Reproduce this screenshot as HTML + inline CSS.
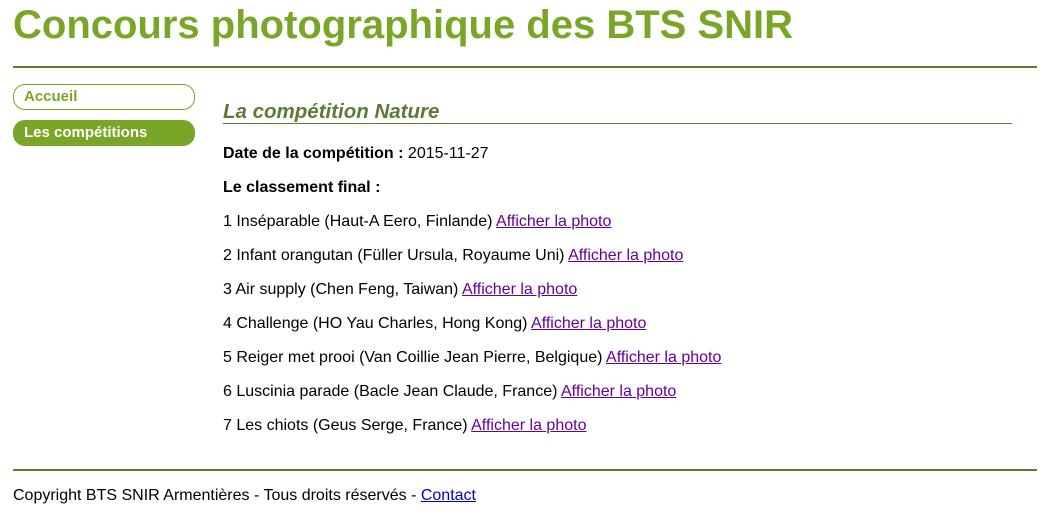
<!DOCTYPE html>
<html><head><meta charset="utf-8"><style>
body{margin:0;width:1047px;height:515px;font-family:"Liberation Sans",Arial,sans-serif;background:#fff;color:#000;position:relative;overflow:hidden}
h1{position:absolute;left:13px;top:3px;margin:0;font-size:40px;font-weight:bold;color:#7aa627;white-space:nowrap}
.rule{position:absolute;left:13px;width:1024px;height:2px;background:#5e7a34}
.nav{position:absolute;left:13px;font-size:15px;font-weight:bold;box-sizing:border-box;border-radius:12px}
.n1{top:84px;width:182px;height:26px;border:1px solid #7aa627;color:#7aa627;line-height:24px;padding-left:10px}
.n2{top:120px;width:182px;height:26px;background:#7aa627;color:#fff;line-height:26px;padding-left:11px}
h2{position:absolute;left:223px;top:101px;margin:0;width:789px;font-size:20.5px;font-style:italic;font-weight:bold;color:#5e7a34;border-bottom:1px solid #5e7a34;padding-bottom:0;line-height:22px}
.p{position:absolute;left:223px;font-size:16px;white-space:nowrap}
a{color:#660099;text-decoration:underline}
.f{position:absolute;left:13px;top:487px;font-size:16px}
.f a{color:#0000cc}
</style></head><body>
<h1>Concours photographique des BTS SNIR</h1>
<div class="rule" style="top:66px"></div>
<div class="nav n1">Accueil</div>
<div class="nav n2">Les compétitions</div>
<h2>La compétition Nature</h2>
<div class="p" style="top:145px"><b>Date de la compétition :</b> 2015-11-27</div>
<div class="p" style="top:179px"><b>Le classement final :</b></div>
<div class="p" style="top:213px">1 Inséparable (Haut-A Eero, Finlande) <a>Afficher la photo</a></div>
<div class="p" style="top:247px">2 Infant orangutan (Füller Ursula, Royaume Uni) <a>Afficher la photo</a></div>
<div class="p" style="top:281px">3 Air supply (Chen Feng, Taiwan) <a>Afficher la photo</a></div>
<div class="p" style="top:315px">4 Challenge (HO Yau Charles, Hong Kong) <a>Afficher la photo</a></div>
<div class="p" style="top:349px">5 Reiger met prooi (Van Coillie Jean Pierre, Belgique) <a>Afficher la photo</a></div>
<div class="p" style="top:383px">6 Luscinia parade (Bacle Jean Claude, France) <a>Afficher la photo</a></div>
<div class="p" style="top:417px">7 Les chiots (Geus Serge, France) <a>Afficher la photo</a></div>
<div class="rule" style="top:469px"></div>
<div class="f">Copyright BTS SNIR Armentières - Tous droits réservés - <a>Contact</a></div>
</body></html>
